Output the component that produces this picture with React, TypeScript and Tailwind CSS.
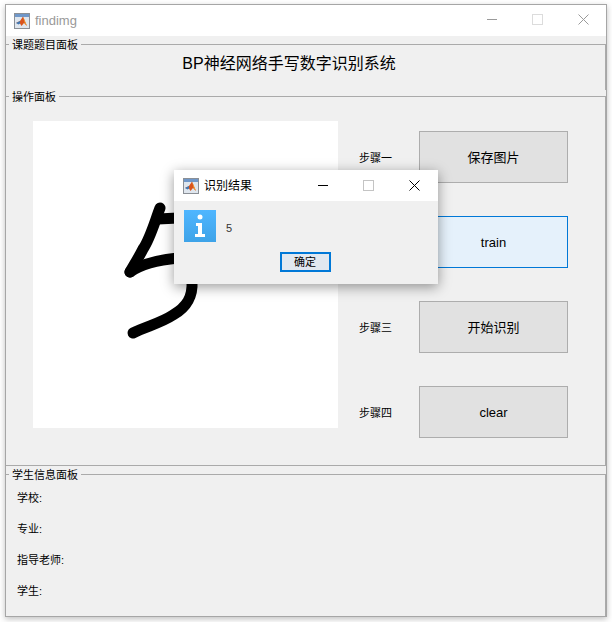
const cjk = "font-['Liberation_Sans','Noto_Sans_CJK_SC',sans-serif]";

const MatlabIcon = () => (
  <svg width="16" height="16" viewBox="0 0 16 16" className="shrink-0">
    <rect x="0.5" y="0.5" width="15" height="15" fill="#dfe6ee" stroke="#8a8f96" />
    <rect x="1" y="1" width="14" height="3" fill="#6f97c9" />
    <path d="M2 10 L6 8 L9 3.5 L13 13 L10 10 L7.5 13 L6 10.5 Z" fill="#d9541e" />
    <path d="M2 10 L6 8 L6 10.5 L4.5 11.5 Z" fill="#3f78b5" />
    <path d="M9 3.5 L13 13 L11 11 Z" fill="#f0a030" />
  </svg>
);

const WindowButtons = ({ dim }: { dim?: boolean }) => {
  const stroke = dim ? "#9a9a9a" : "#000000";
  return (
    <div className={dim ? "flex items-center gap-[35px] mb-[3px]" : "flex items-center gap-[35px]"}>
      <svg width="11" height="11" viewBox="0 0 11 11">
        <path d="M1 5.5H11" stroke={stroke} />
      </svg>
      <svg width="11" height="11" viewBox="0 0 11 11">
        <rect x="0.5" y="0.5" width="10" height="10" fill="none" stroke={dim ? "#dcdcdc" : "#c4c4c4"} />
      </svg>
      <svg width="11" height="11" viewBox="0 0 11 11">
        <path d="M0.5 0.5L10.5 10.5M10.5 0.5L0.5 10.5" stroke={stroke} />
      </svg>
    </div>
  );
};

const Step = ({ label, text, active }: { label: string; text: string; active?: boolean }) => (
  <div className="flex items-center h-[52px]">
    <span className="w-[60px] mt-[2px] text-[11px] text-black">{label}</span>
    <button
      className={
        active
          ? "w-[149px] h-[52px] pt-[1px] border border-[#0078d7] bg-[#e5f1fb] text-[13px] text-black"
          : "w-[149px] h-[52px] pt-[1px] border border-[#adadad] bg-[#e1e1e1] text-[13px] text-black"
      }
    >
      {text}
    </button>
  </div>
);

const Legend = ({ children }: { children: string }) => (
  <legend className="ml-[3px] px-[3px] h-[12px] leading-[14px] text-[11px] text-black">{children}</legend>
);

export default function App() {
  return (
    <div className={`relative w-[612px] h-[622px] bg-white pt-[4px] pl-[5px] ${cjk}`}>
      <div className="flex flex-col w-[602px] h-[613px] bg-[#f0f0f0] border border-[#a6a6a6] shadow-[0_2px_6px_rgba(0,0,0,0.25)]">
        <div className="flex items-center justify-between shrink-0 h-[31px] bg-white pl-[8px] pr-[17px]">
          <div className="flex items-center gap-[5px]">
            <MatlabIcon />
            <span className="text-[13px] text-[#999999]">findimg</span>
          </div>
          <WindowButtons dim />
        </div>

        <fieldset className="shrink-0 h-[52px] mt-[2px] border border-[#aaaaaa] border-l-0 border-b-0 pr-0">
          <Legend>课题题目面板</Legend>
          <div className="flex justify-center pt-[4px] pr-[33px] text-[16px] leading-[20px] text-black">
            BP神经网络手写数字识别系统
          </div>
        </fieldset>

        <fieldset className="shrink-0 h-[376px] border border-[#aaaaaa] border-l-0">
          <Legend>操作面板</Legend>
          <div className="flex pl-[27px] pt-[19px]">
            <div className="w-[305px] h-[307px] bg-white">
              <svg width="305" height="307" viewBox="0 0 305 307">
                <g fill="none" stroke="#000000" strokeWidth="11" strokeLinecap="round" strokeLinejoin="round">
                  <path d="M127 87 C122 100 117 118 110 128 C106 136 101 144 97 151" />
                  <path d="M97 151 C108 143 125 139 145 137" />
                  <path d="M125 98 L145 97" />
                  <path d="M159 160 C160 176 154 186 140 194 C128 202 114 205 100 212" />
                </g>
              </svg>
            </div>
            <div className="flex flex-col gap-[33px] pl-[21px] pt-[10px]">
              <Step label="步骤一" text="保存图片" />
              <Step label="步骤二" text="train" active />
              <Step label="步骤三" text="开始识别" />
              <Step label="步骤四" text="clear" />
            </div>
          </div>
        </fieldset>

        <fieldset className="flex-1 mt-[2px] border border-[#aaaaaa] border-l-0 border-b-0">
          <Legend>学生信息面板</Legend>
          <div className="flex flex-col gap-[17px] pl-[11px] pt-[11px] text-[11px] leading-[14px] text-black">
            <span>学校:</span>
            <span>专业:</span>
            <span>指导老师:</span>
            <span>学生:</span>
          </div>
        </fieldset>
      </div>

      {/* dialog sits over the main window */}
      <div className="absolute left-[174px] top-[170px] w-[264px] h-[114px] bg-[#f0f0f0] flex flex-col shadow-[0_3px_12px_rgba(0,0,0,0.4)]">
        <div className="flex items-center justify-between h-[31px] bg-white pl-[9px] pr-[18px]">
          <div className="flex items-center gap-[5px]">
            <MatlabIcon />
            <span className="text-[12px] text-black">识别结果</span>
          </div>
          <WindowButtons />
        </div>
        <div className="flex items-center pl-[10px] pt-[9px] gap-[10px]">
          <div className="flex items-center justify-center w-[32px] h-[32px] bg-gradient-to-b from-[#4fb6ff] to-[#3ea3e8]">
            <svg width="14" height="24" viewBox="0 0 14 24">
              <circle cx="7" cy="3" r="2.5" fill="#ffffff" />
              <path d="M3 9H9V20H12V23H2V20H5V12H3Z" fill="#ffffff" />
            </svg>
          </div>
          <span className="pt-[5px] text-[11px] text-[#333333]">5</span>
        </div>
        <div className="flex justify-center pt-[10px] pr-[2px]">
          <button className="w-[51px] h-[20px] border-2 border-[#0078d7] bg-[#e1e8f0] text-[11px] leading-none text-black">
            确定
          </button>
        </div>
      </div>
    </div>
  );
}
